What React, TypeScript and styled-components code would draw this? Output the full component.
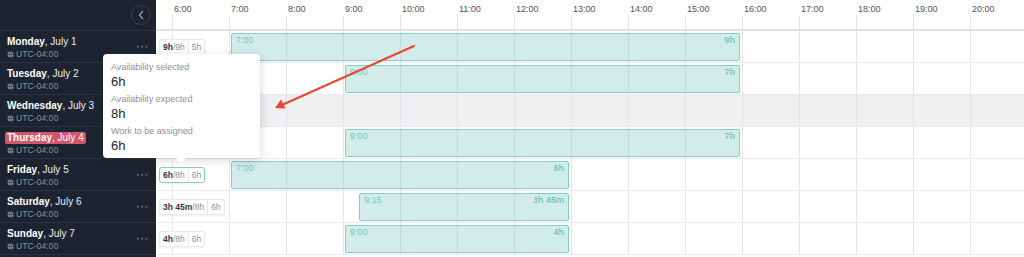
import React from 'react';
import styled, { createGlobalStyle, css } from 'styled-components';

const HOUR = 57;
const OFFSET = 16;
const FIRST_HOUR = 6;

const GlobalStyle = createGlobalStyle`
  html, body {
    margin: 0;
    padding: 0;
    background: #ffffff;
    font-family: 'Liberation Sans', Arial, sans-serif;
    overflow: hidden;
  }
`;

const Page = styled.div`
  position: relative;
  display: flex;
  height: 257px;
  width: 1024px;
  overflow: hidden;
`;

const Sidebar = styled.aside`
  width: 156px;
  flex-shrink: 0;
  background: #1d2431;
  display: flex;
  flex-direction: column;
`;

const SidebarHeader = styled.div`
  height: 31px;
  box-sizing: border-box;
  border-bottom: 1px solid #2b3341;
  display: flex;
  align-items: center;
  justify-content: flex-end;
  padding-right: 5px;
`;

const CollapseButton = styled.button`
  width: 20px;
  height: 20px;
  border-radius: 50%;
  border: 1px solid #3a4351;
  background: transparent;
  padding: 0;
  display: flex;
  align-items: center;
  justify-content: center;
  margin-top: -1px;
`;

const DayRow = styled.div`
  height: 32px;
  box-sizing: border-box;
  border-bottom: 1px solid #2b3341;
  display: flex;
  align-items: center;
  justify-content: space-between;
  padding: 2px 7px 0;
`;

const DayInfo = styled.div`
  display: flex;
  flex-direction: column;
  align-items: flex-start;
  gap: 1px;
`;

const DayName = styled.div<{ $today?: boolean }>`
  font-size: 10px;
  line-height: 12px;
  color: #e9ecf0;
  b {
    font-weight: 700;
    color: #ffffff;
  }
  ${(p) =>
    p.$today &&
    css`
      background: #d4566b;
      color: #ffffff;
      border-radius: 2px;
      padding: 0 2px;
      margin-left: -2px;
    `}
`;

const Zone = styled.div`
  display: flex;
  align-items: center;
  gap: 2px;
  font-size: 8.5px;
  line-height: 11px;
  color: #8a929e;
  letter-spacing: 0.1px;
`;

const MoreDots = styled.span`
  font-size: 5px;
  letter-spacing: 1.2px;
  color: #5c6572;
  margin-top: -4px;
`;

const Timeline = styled.main`
  flex: 1;
  display: flex;
  flex-direction: column;
  min-width: 0;
`;

const HourHeader = styled.div`
  height: 31px;
  box-sizing: border-box;
  border-bottom: 2px solid #dfe2e5;
  display: flex;
  padding-left: ${OFFSET}px;
`;

const HourCell = styled.div`
  position: relative;
  width: ${HOUR}px;
  flex-shrink: 0;
  padding: 4px 0 0 2px;
  box-sizing: border-box;
  font-size: 9px;
  line-height: 11px;
  color: #4f555c;
  &::after {
    content: '';
    position: absolute;
    left: 0;
    top: 15px;
    bottom: 0;
    width: 1px;
    background: #e3e6e9;
  }
`;

const TrackRow = styled.div<{ $shaded?: boolean }>`
  position: relative;
  height: 32px;
  box-sizing: border-box;
  border-bottom: 1px solid #e8eaed;
  display: flex;
  align-items: center;
  padding-left: 3px;
  background-color: ${(p) => (p.$shaded ? '#efeff1' : '#ffffff')};
  background-image: linear-gradient(to right, #e3e6e9 1px, transparent 1px);
  background-size: ${HOUR}px 100%;
  background-position: ${OFFSET}px 0;
  background-repeat: repeat-x;
`;

const SummaryChip = styled.div<{ $selected?: boolean }>`
  position: relative;
  z-index: 1;
  display: flex;
  height: 16px;
  box-sizing: border-box;
  background: #ffffff;
  border: 1px solid ${(p) => (p.$selected ? '#86cdc5' : '#e7e9ec')};
  border-radius: 3px;
  box-shadow: 0 1px 2px rgba(0, 0, 0, 0.06);
  font-size: 8.5px;
  line-height: 14px;
  color: #8b9097;
`;

const ChipPart = styled.span`
  padding: 0 3px;
  b {
    color: #33383e;
    font-weight: 700;
  }
  & + & {
    border-left: 1px solid #e7e9ec;
  }
`;

const Shift = styled.div`
  position: absolute;
  top: 2px;
  bottom: 1px;
  box-sizing: border-box;
  background: rgba(127, 203, 195, 0.36);
  border: 1px solid #86cdc5;
  border-radius: 2px;
  display: flex;
  justify-content: space-between;
  align-items: flex-start;
  padding: 1px 4px;
  font-size: 9px;
  line-height: 11px;
  color: #7cc6be;
  b {
    font-weight: 700;
  }
`;

const Tooltip = styled.div`
  position: absolute;
  left: 103px;
  top: 54px;
  width: 157px;
  box-sizing: border-box;
  padding: 7px 8px 4px;
  background: #ffffff;
  border-radius: 4px;
  box-shadow: 0 2px 10px rgba(20, 30, 40, 0.18);
  z-index: 5;
  &::after {
    content: '';
    position: absolute;
    left: 73px;
    bottom: -5px;
    border-left: 5px solid transparent;
    border-right: 5px solid transparent;
    border-top: 5px solid #ffffff;
  }
`;

const TipGroup = styled.div`
  & + & {
    margin-top: 3px;
  }
`;

const TipLabel = styled.div`
  font-size: 9px;
  line-height: 12px;
  color: #8c9197;
`;

const TipValue = styled.div`
  margin-top: 1px;
  font-size: 13px;
  line-height: 16px;
  color: #24282d;
  font-weight: 500;
`;

const Annotation = styled.svg`
  position: absolute;
  left: 0;
  top: 0;
  pointer-events: none;
  z-index: 6;
`;

type Day = {
  name: string;
  date: string;
  today?: boolean;
  shaded?: boolean;
  selected?: boolean;
  done: string;
  expected: string;
  todo: string;
  shift?: { start: number; end: number; from: string; total: string };
};

const days: Day[] = [
  { name: 'Monday', date: 'July 1', done: '9h', expected: '9h', todo: '5h', shift: { start: 7, end: 16, from: '7:00', total: '9h' } },
  { name: 'Tuesday', date: 'July 2', done: '7h', expected: '8h', todo: '6h', shift: { start: 9, end: 16, from: '9:00', total: '7h' } },
  { name: 'Wednesday', date: 'July 3', shaded: true, done: '0h', expected: '8h', todo: '6h' },
  { name: 'Thursday', date: 'July 4', today: true, done: '7h', expected: '8h', todo: '6h', shift: { start: 9, end: 16, from: '9:00', total: '7h' } },
  { name: 'Friday', date: 'July 5', selected: true, done: '6h', expected: '8h', todo: '6h', shift: { start: 7, end: 13, from: '7:00', total: '6h' } },
  { name: 'Saturday', date: 'July 6', done: '3h 45m', expected: '8h', todo: '6h', shift: { start: 9.25, end: 13, from: '9:15', total: '3h 45m' } },
  { name: 'Sunday', date: 'July 7', done: '4h', expected: '8h', todo: '6h', shift: { start: 9, end: 13, from: '9:00', total: '4h' } },
];

const hours = Array.from({ length: 15 }, (_, i) => FIRST_HOUR + i);

function Globe() {
  return (
    <svg width="7" height="7" viewBox="0 0 7 7">
      <circle cx="3.5" cy="3.5" r="3" fill="#8a929e" />
      <path d="M0.6 3.5h5.8M3.5 0.5c-1.3 1.6-1.3 4.4 0 6M3.5 0.5c1.3 1.6 1.3 4.4 0 6" stroke="#1d2431" strokeWidth="0.5" fill="none" />
    </svg>
  );
}

function App(): JSX.Element {
  return (
    <>
      <GlobalStyle />
      <Page>
        <Sidebar>
          <SidebarHeader>
            <CollapseButton>
              <svg width="8" height="10" viewBox="0 0 8 10">
                <path d="M5.5 1.5L2.5 5l3 3.5" stroke="#9aa2ad" strokeWidth="1.3" fill="none" strokeLinecap="round" strokeLinejoin="round" />
              </svg>
            </CollapseButton>
          </SidebarHeader>
          {days.map((d) => (
            <DayRow key={d.name}>
              <DayInfo>
                <DayName $today={d.today}>
                  <b>{d.name}</b>, {d.date}
                </DayName>
                <Zone>
                  <Globe />
                  UTC-04:00
                </Zone>
              </DayInfo>
              <MoreDots>●●●</MoreDots>
            </DayRow>
          ))}
        </Sidebar>

        <Timeline>
          <HourHeader>
            {hours.map((h) => (
              <HourCell key={h}>{h}:00</HourCell>
            ))}
          </HourHeader>
          {days.map((d) => (
            <TrackRow key={d.name} $shaded={d.shaded}>
              <SummaryChip $selected={d.selected}>
                <ChipPart>
                  <b>{d.done}</b>/{d.expected}
                </ChipPart>
                <ChipPart>{d.todo}</ChipPart>
              </SummaryChip>
              {d.shift && (
                <Shift
                  style={{
                    left: OFFSET + (d.shift.start - FIRST_HOUR) * HOUR + 2,
                    width: (d.shift.end - d.shift.start) * HOUR - 4,
                  }}
                >
                  <span>{d.shift.from}</span>
                  <b>{d.shift.total}</b>
                </Shift>
              )}
            </TrackRow>
          ))}
        </Timeline>

        <Tooltip>
          <TipGroup>
            <TipLabel>Availability selected</TipLabel>
            <TipValue>6h</TipValue>
          </TipGroup>
          <TipGroup>
            <TipLabel>Availability expected</TipLabel>
            <TipValue>8h</TipValue>
          </TipGroup>
          <TipGroup>
            <TipLabel>Work to be assigned</TipLabel>
            <TipValue>6h</TipValue>
          </TipGroup>
        </Tooltip>

        <Annotation width="1024" height="257" viewBox="0 0 1024 257">
          <line x1="414" y1="46" x2="283" y2="104.5" stroke="#e8472f" strokeWidth="2" strokeLinecap="round" />
          <polygon points="275,108 285.5,108.5 281,99.5" fill="#e8472f" />
        </Annotation>
      </Page>
    </>
  );
}

export default App;
